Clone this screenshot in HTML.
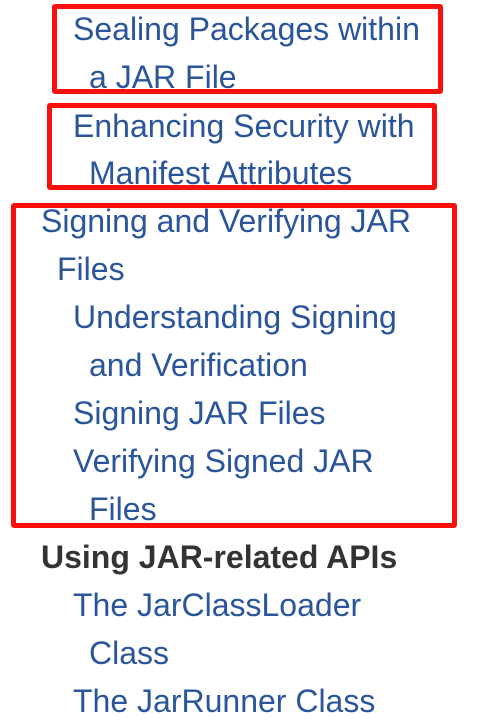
<!DOCTYPE html>
<html><head><style>
body{margin:0;width:494px;height:722px;background:#fff;position:relative;overflow:hidden;font-family:"Liberation Sans",Arial,sans-serif;}
.l{position:absolute;font-size:32px;line-height:48px;color:#2a559a;white-space:nowrap;}
.b{color:#333;font-weight:bold;}
.r{position:absolute;border:5px solid #fb0f0c;border-radius:3px;box-sizing:border-box;}
</style></head><body>
<div class="l" style="left:73px;top:5px">Sealing Packages within</div>
<div class="l" style="left:89px;top:53px">a JAR File</div>
<div class="l" style="left:73px;top:102px">Enhancing Security with</div>
<div class="l" style="left:89px;top:149px">Manifest Attributes</div>
<div class="l" style="left:41px;top:197px">Signing and Verifying JAR</div>
<div class="l" style="left:57px;top:245px">Files</div>
<div class="l" style="left:73px;top:293px">Understanding Signing</div>
<div class="l" style="left:89px;top:341px">and Verification</div>
<div class="l" style="left:73px;top:389px">Signing JAR Files</div>
<div class="l" style="left:73px;top:437px">Verifying Signed JAR</div>
<div class="l" style="left:89px;top:485px">Files</div>
<div class="l b" style="left:41px;top:533px">Using JAR-related APIs</div>
<div class="l" style="left:73px;top:581px">The JarClassLoader</div>
<div class="l" style="left:89px;top:629px">Class</div>
<div class="l" style="left:73px;top:677px">The JarRunner Class</div>
<div class="r" style="left:52px;top:4px;width:391px;height:90px"></div>
<div class="r" style="left:47px;top:103px;width:390px;height:87px"></div>
<div class="r" style="left:11px;top:203px;width:446px;height:325px"></div>
</body></html>
